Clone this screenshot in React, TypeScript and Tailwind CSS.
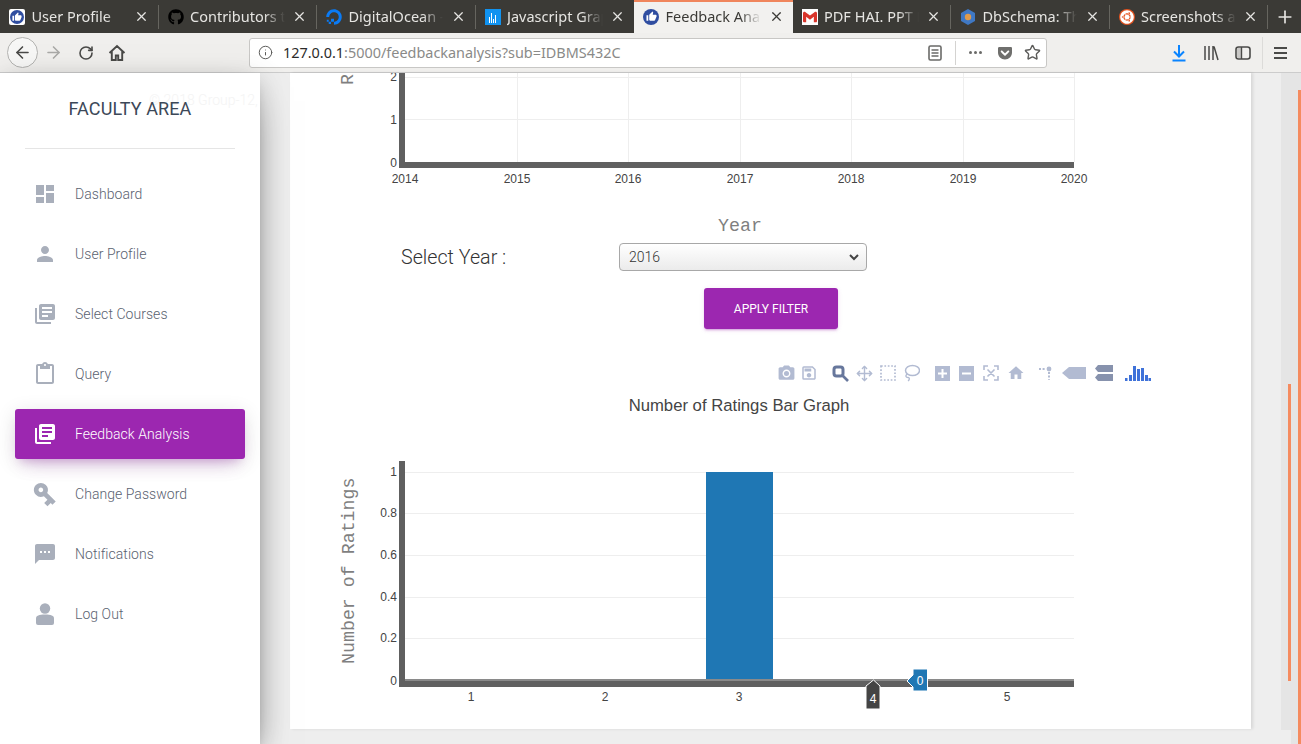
import { ArrowLeft, ArrowRight, RotateCw, Info, Star, Move, X, Plus } from "lucide-react";
import { FaGithub, FaDigitalOcean, FaGetPocket, FaUbuntu } from "react-icons/fa";
import { SiGmail } from "react-icons/si";
import {
  MdDashboard,
  MdPerson,
  MdLibraryBooks,
  MdContentPaste,
  MdVpnKey,
  MdSms,
  MdPhotoCamera,
  MdOutlineSave,
  MdHome,
  MdThumbUp,
} from "react-icons/md";
import type { ReactNode } from "react";

const TABS: { title: string; icon: ReactNode; active?: boolean; noDivider?: boolean }[] = [
  {
    title: "User Profile",
    icon: (
      <span className="flex h-4 w-4 items-center justify-center rounded-[2px] bg-white">
        <span className="flex h-[14px] w-[14px] items-center justify-center rounded-full bg-[#2f4da0]">
          <MdThumbUp size={10} className="text-white" />
        </span>
      </span>
    ),
  },
  { title: "Contributors to", icon: <FaGithub size={16} className="text-black" /> },
  { title: "DigitalOcean - Cl", icon: <FaDigitalOcean size={16} className="text-[#0a7bf5]" /> },
  {
    title: "Javascript Graph",
    noDivider: true,
    icon: (
      <span className="flex h-4 w-4 items-end justify-center gap-px bg-[#1193f0] pb-0.5">
        <i className="h-1.5 w-px bg-white" />
        <i className="h-2.5 w-px bg-white" />
        <i className="h-1 w-px bg-white" />
        <i className="h-2 w-px bg-white" />
      </span>
    ),
  },
  {
    title: "Feedback Analysis",
    active: true,
    icon: (
      <span className="flex h-4 w-4 items-center justify-center rounded-full bg-[#2f4da0]">
        <MdThumbUp size={11} className="text-white" />
      </span>
    ),
  },
  {
    title: "PDF HAI. PPT NU",
    icon: (
      <span className="flex h-4 w-4 items-center justify-center bg-white">
        <SiGmail size={14} className="text-[#d9352b]" />
      </span>
    ),
  },
  {
    title: "DbSchema: The",
    icon: (
      <svg width="16" height="16" viewBox="0 0 16 16">
        <path d="M8 0l7 4v8l-7 4-7-4V4z" fill="#3f78c4" />
        <circle cx="8" cy="8" r="3.2" fill="#e09a4a" />
      </svg>
    ),
  },
  {
    title: "Screenshots an",
    icon: (
      <span className="flex h-4 w-4 items-center justify-center rounded-full bg-[#e5531f]">
        <FaUbuntu size={14} className="text-white" />
      </span>
    ),
  },
];

const NAV = [
  { label: "Dashboard", icon: <MdDashboard size={24} /> },
  { label: "User Profile", icon: <MdPerson size={24} /> },
  { label: "Select Courses", icon: <MdLibraryBooks size={24} /> },
  { label: "Query", icon: <MdContentPaste size={24} /> },
  { label: "Feedback Analysis", icon: <MdLibraryBooks size={24} />, active: true },
  { label: "Change Password", icon: <MdVpnKey size={28} className="rotate-45" /> },
  { label: "Notifications", icon: <MdSms size={24} /> },
  {
    label: "Log Out",
    icon: (
      <svg width="18" height="22" viewBox="0 0 18 22" fill="currentColor">
        <circle cx="9" cy="5.500" r="5.200" />
        <path d="M0 15.500C0 12.500 3 11.500 9 11.500s9 1 9 4V20a2 2 0 0 1-2 2H2a2 2 0 0 1-2-2z" />
      </svg>
    ),
  },
];

function Tab({
  title,
  icon,
  active,
  noDivider,
}: {
  title: string;
  icon: ReactNode;
  active?: boolean;
  noDivider?: boolean;
}) {
  return (
    <div
      className={`flex h-[33px] w-[158.5px] items-center pl-[9px] pr-[9px] ${
        active ? "border-t-2 border-[#f0855c] bg-[#f2f1ef] pb-[2px] text-[#3b3a36]" : "text-[#e6e5e2]"
      }`}
    >
      <span className="flex h-4 w-4 shrink-0 items-center justify-center">{icon}</span>
      <span className="ml-[6.5px] w-[102px] overflow-hidden whitespace-nowrap text-[14.5px] [mask-image:linear-gradient(to_right,black_78%,transparent_100%)]">
        {title}
      </span>
      <X size={15} strokeWidth={2} className="ml-[7.5px] shrink-0" />
      {!active && !noDivider && (
        <span className="ml-auto h-[24px] w-px shrink-0 translate-x-[9px] bg-[#66655f]" />
      )}
    </div>
  );
}

function BrowserChrome() {
  return (
    <div className="font-['Noto_Sans',sans-serif]">
      <div className="flex h-[33px] bg-[#3b3a36]">
        {TABS.map((tab) => (
          <Tab key={tab.title} {...tab} />
        ))}
        <span className="ml-[5px] flex w-6 items-center justify-center text-[#e6e5e2]">
          <Plus size={20} strokeWidth={2} />
        </span>
      </div>
      <div className="flex h-[40px] items-center border-b border-[#cccccc] bg-[#f0efed] text-[#4a4a48]">
        <span className="ml-[7px] flex h-[31px] w-[31px] items-center justify-center rounded-full border border-[#b3b3b1] bg-[#f7f7f6]">
          <ArrowLeft size={19} strokeWidth={2} />
        </span>
        <ArrowRight size={19} strokeWidth={2} className="ml-[6px] text-[#a9a9a7]" />
        <RotateCw size={16} strokeWidth={2.4} className="ml-[15px]" />
        <svg width="18" height="18" viewBox="0 0 18 18" className="ml-[14px]">
          <path
            d="M1.500 9L9 2l7.500 7M3.800 7.500V16h4v-4.500h2.400V16h4V7.500"
            fill="none"
            stroke="currentColor"
            strokeWidth="1.900"
          />
        </svg>
        <div className="ml-[123px] flex h-[30px] w-[798px] items-center rounded-[3px] border border-[#c8c7c5] bg-white">
          <Info size={15} strokeWidth={1.6} className="ml-[8px] text-[#5c5c5a]" />
          <span className="ml-[10px] pt-px text-[14.43px] text-[#8a8a88]">
            <span className="text-[#2b2b2a]">127.0.0.1</span>:5000/feedbackanalysis?sub=IDBMS432C
          </span>
          <svg width="14" height="16" viewBox="0 0 14 16" className="ml-[307px] text-[#6a6a68]">
            <rect x="1" y="1" width="12" height="14" rx="1.500" fill="none" stroke="currentColor" strokeWidth="1.600" />
            <path d="M3.500 5h7M3.500 8h7M3.500 11h7" stroke="currentColor" strokeWidth="1.400" />
          </svg>
          <span className="ml-[13px] h-[24px] w-px bg-[#d4d3d1]" />
          <span className="ml-[13px] flex gap-[2px]">
            <i className="h-[3px] w-[3px] rounded-full bg-[#6a6a68]" />
            <i className="h-[3px] w-[3px] rounded-full bg-[#6a6a68]" />
            <i className="h-[3px] w-[3px] rounded-full bg-[#6a6a68]" />
          </span>
          <FaGetPocket size={16} className="ml-[15px] text-[#6f6f6d]" />
          <Star size={17} strokeWidth={2} className="ml-[11px] text-[#5c5c5a]" />
        </div>
        <svg width="16" height="18" viewBox="0 0 16 18" className="ml-[124px] text-[#0a84ff]">
          <path d="M8 1v11M3 7.500L8 12.500 13 7.500M1.500 16.500h13" fill="none" stroke="currentColor" strokeWidth="2" />
        </svg>
        <svg width="16" height="16" viewBox="0 0 16 16" className="ml-[16px]">
          <path d="M2 1v14M6 1v14M10 1v14M11 1.500l4 13.500" fill="none" stroke="currentColor" strokeWidth="1.500" />
        </svg>
        <svg width="16" height="14" viewBox="0 0 16 14" className="ml-[16px]">
          <rect x="1" y="1" width="14" height="12" rx="2.500" fill="none" stroke="currentColor" strokeWidth="1.600" />
          <rect x="2" y="2" width="4" height="10" fill="#c9c8c6" />
          <path d="M6.500 1v12" stroke="currentColor" strokeWidth="1.400" />
        </svg>
        <span className="ml-[11px] h-[32px] w-px bg-[#dcdbd9]" />
        <span className="ml-[11px] flex w-[13px] flex-col gap-[3px]">
          <i className="h-[2px] bg-[#4a4a48]" />
          <i className="h-[2px] bg-[#4a4a48]" />
          <i className="h-[2px] bg-[#4a4a48]" />
        </span>
      </div>
    </div>
  );
}

function Sidebar() {
  return (
    <aside className="relative z-10 w-[260px] shrink-0 bg-white font-['Roboto',sans-serif] shadow-[0_16px_38px_-12px_rgba(0,0,0,0.56),0_4px_25px_0_rgba(0,0,0,0.12),0_8px_10px_-5px_rgba(0,0,0,0.2)]">
      <span className="absolute left-[149px] top-[17px] w-[111px] overflow-hidden whitespace-nowrap text-[14px] font-light text-[#f4f4f4]">
        © 2018 Group-12,
      </span>
      <div className="mx-[25px] flex h-[76px] items-start justify-center border-b border-[#e5e5e5] pt-[24px]">
        <span className="relative text-[18px] leading-[24px] tracking-[0.1px] text-[#3c4858]">FACULTY AREA</span>
      </div>
      <nav className="mx-[15px] mt-[20px] flex flex-col gap-[10px]">
        {NAV.map((item) => (
          <div
            key={item.label}
            className={`flex h-[50px] items-center rounded-[3px] ${
              item.active
                ? "bg-[#9c27b0] text-white shadow-[0_12px_20px_-10px_rgba(156,39,176,0.28),0_4px_20px_0_rgba(0,0,0,0.12),0_7px_8px_-5px_rgba(156,39,176,0.2)]"
                : "text-[#5a6270]"
            }`}
          >
            <span
              className={`flex w-[60px] items-center justify-center ${
                item.active ? "text-white" : "text-[#a9afbb]"
              }`}
            >
              {item.icon}
            </span>
            <span className="text-[14px] font-light tracking-[0.05px]">{item.label}</span>
          </div>
        ))}
      </nav>
    </aside>
  );
}

function TopChart() {
  const xs = [405, 517, 628, 740, 851, 963, 1074];
  const years = [2014, 2015, 2016, 2017, 2018, 2019, 2020];
  return (
    <svg width="961" height="164" viewBox="290 73 961 164" className="block">
      <g shapeRendering="crispEdges">
        {[77, 119].map((y) => (
          <line key={y} x1="405" x2="1074" y1={y} y2={y} stroke="#eeeeee" />
        ))}
        {xs.slice(1).map((x) => (
          <line key={x} x1={x} x2={x} y1="73" y2="162" stroke="#eeeeee" />
        ))}
        <rect x="399" y="73" width="6" height="95" fill="#606060" />
        <rect x="399" y="162" width="675" height="6" fill="#606060" />
      </g>
      <g fontFamily="Liberation Sans, sans-serif" fontSize="12" fill="#444444">
        <text x="397" y="81" textAnchor="end">2</text>
        <text x="397" y="124" textAnchor="end">1</text>
        <text x="397" y="167" textAnchor="end">0</text>
        {years.map((year, i) => (
          <text key={year} x={xs[i]} y="183" textAnchor="middle">
            {year}
          </text>
        ))}
      </g>
      <text
        x="0"
        y="0"
        transform="translate(353 85) rotate(-90)"
        fontFamily="Liberation Mono, monospace"
        fontSize="18.3"
        fill="#7f7f7f"
      >
        R
      </text>
      <text x="740" y="231" textAnchor="middle" fontFamily="Liberation Mono, monospace" fontSize="18.3" fill="#7f7f7f">
        Year
      </text>
    </svg>
  );
}

function ModeBar() {
  const soft = "text-[#b2bbd2]";
  return (
    <div className="ml-[487px] flex h-4 items-center">
      <MdPhotoCamera size={19} className={soft} />
      <MdOutlineSave size={18} className={`ml-[4px] ${soft}`} />
      <svg width="17" height="17" viewBox="0 0 17 17" className="ml-[14px] text-[#67779c]">
        <rect x="2" y="2" width="9" height="9" rx="2.500" fill="none" stroke="currentColor" strokeWidth="3" />
        <path d="M11 11l5 5" stroke="currentColor" strokeWidth="2.600" />
      </svg>
      <Move size={17} strokeWidth={2} className={`ml-[7px] ${soft}`} />
      <svg width="16" height="16" viewBox="0 0 16 16" className={`ml-[7px] ${soft}`}>
        <rect x="1" y="1" width="14" height="14" fill="none" stroke="currentColor" strokeWidth="1.700" strokeDasharray="1.700 1.700" />
      </svg>
      <svg width="17" height="18" viewBox="0 0 17 18" className={`ml-[7px] ${soft}`}>
        <ellipse cx="9.500" cy="6.500" rx="7" ry="5" fill="none" stroke="currentColor" strokeWidth="1.500" />
        <path d="M4 10c-2 2-1 3.500 1 3.500s1.500 2.500 0 3.500" fill="none" stroke="currentColor" strokeWidth="1.400" />
      </svg>
      <svg width="15" height="15" viewBox="0 0 15 15" className={`ml-[15px] ${soft}`}>
        <path fillRule="evenodd" d="M0 0h15v15H0zM6.500 3v3.500H3v2h3.500V12h2V8.500H12v-2H8.500V3z" fill="currentColor" />
      </svg>
      <svg width="15" height="15" viewBox="0 0 15 15" className={`ml-[9px] ${soft}`}>
        <path fillRule="evenodd" d="M0 0h15v15H0zM3 6.500v2h9v-2z" fill="currentColor" />
      </svg>
      <svg width="16" height="16" viewBox="0 0 16 16" className={`ml-[9px] ${soft}`}>
        <path d="M1 5V1h4M11 1h4v4M15 11v4h-4M5 15H1v-4M4.500 4.500l7 7M11.500 4.500l-7 7" fill="none" stroke="currentColor" strokeWidth="1.600" />
      </svg>
      <MdHome size={18} className={`ml-[8px] ${soft}`} />
      <svg width="14" height="14" viewBox="0 0 14 14" className={`ml-[13px] ${soft}`}>
        <circle cx="11" cy="3" r="2.400" fill="currentColor" />
        <path d="M1 3h6M11 6v8" stroke="currentColor" strokeWidth="2" strokeDasharray="2 1.600" />
      </svg>
      <svg width="24" height="14" viewBox="0 0 24 14" className={`ml-[10px] ${soft}`}>
        <path d="M0 7l7-6h17v12H7z" fill="currentColor" />
      </svg>
      <svg width="18" height="16" viewBox="0 0 18 16" className="ml-[9px] text-[#8792ad]">
        <path d="M3 0h15v7H3L0 3.500zM3 9h15v7H3L0 12.500z" fill="currentColor" />
      </svg>
      <svg width="26" height="16" viewBox="0 0 26 16" className="ml-[12px] text-[#3f72d9]">
        <path
          d="M0 13h2.500v3H0zM4 10h3v6H4zM8 1h3v15H8zM12 4h3v12h-3zM16 3h3v13h-3zM20 10h3v6h-3zM23.500 13H26v3h-2.500z"
          fill="currentColor"
        />
      </svg>
    </div>
  );
}

function BarChart() {
  const grid = [472, 513, 555, 597, 638];
  const yLabels = ["1", "0.8", "0.6", "0.4", "0.2"];
  return (
    <svg width="961" height="339" viewBox="290 390 961 339" className="block">
      <text x="739" y="411" textAnchor="middle" fontFamily="Liberation Sans, sans-serif" fontSize="16.7" fill="#444444">
        Number of Ratings Bar Graph
      </text>
      <g shapeRendering="crispEdges">
        {grid.map((y) => (
          <line key={y} x1="405" x2="1074" y1={y} y2={y} stroke="#eeeeee" />
        ))}
        <rect x="706" y="472" width="67" height="208" fill="#1f77b4" />
        <rect x="399" y="461" width="6" height="226" fill="#606060" />
        <rect x="399" y="679" width="675" height="8" fill="#606060" />
        <rect x="405" y="679" width="669" height="2" fill="#8a8a8a" />
      </g>
      <g fontFamily="Liberation Sans, sans-serif" fontSize="12" fill="#444444">
        {grid.map((y, i) => (
          <text key={y} x="397" y={y + 4} textAnchor="end">
            {yLabels[i]}
          </text>
        ))}
        <text x="397" y="685" textAnchor="end">0</text>
        {["1", "2", "3", "5"].map((label) => (
          <text key={label} x={471 + (Number(label) - 1) * 134} y="701" textAnchor="middle">
            {label}
          </text>
        ))}
      </g>
      <text
        transform="translate(354 664) rotate(-90)"
        fontFamily="Liberation Mono, monospace"
        fontSize="18.3"
        fill="#7f7f7f"
      >
        Number of Ratings
      </text>
      <path d="M866 709v-23l7.500-6 6.500 6v23z" fill="#444444" stroke="#ffffff" strokeWidth="1" />
      <text x="873" y="703" textAnchor="middle" fontFamily="Liberation Sans, sans-serif" fontSize="12" fill="#ffffff">
        4
      </text>
      <path d="M907 681l6-6v-6h14.500v22H913v-4z" fill="#1f77b4" stroke="#ffffff" strokeWidth="1" />
      <text x="920" y="685" textAnchor="middle" fontFamily="Liberation Sans, sans-serif" fontSize="12" fill="#ffffff">
        0
      </text>
    </svg>
  );
}

function Card() {
  return (
    <section className="w-[961px] bg-white shadow-[2px_0_3px_rgba(0,0,0,0.1)]">
      <TopChart />
      <div className="ml-[111px] mt-[6px] flex h-[28px] items-center font-['Roboto',sans-serif]">
        <span className="w-[218px] pt-[2px] text-[19.7px] font-light text-[#333333]">Select Year :</span>
        <div className="relative h-[28px] w-[248px]">
          <select
            defaultValue="2016"
            className="h-full w-full appearance-none rounded-[4px] border border-[#a8a8a8] bg-gradient-to-b from-white to-[#ebebeb] pl-[9px] text-[14px] font-light text-[#333333]"
          >
            <option>2015</option>
            <option>2016</option>
            <option>2017</option>
          </select>
          <svg width="10" height="7" viewBox="0 0 10 7" className="pointer-events-none absolute right-[8px] top-[11px] text-[#444444]">
            <path d="M1 1l4 4 4-4" fill="none" stroke="currentColor" strokeWidth="2" />
          </svg>
        </div>
      </div>
      <button className="ml-[414px] mt-[17px] flex h-[41px] w-[134px] items-center justify-center rounded-[3px] bg-[#9c27b0] font-['Roboto',sans-serif] text-[12px] text-white shadow-[0_2px_2px_0_rgba(156,39,176,0.14),0_3px_1px_-2px_rgba(156,39,176,0.2),0_1px_5px_0_rgba(156,39,176,0.12)]">
        APPLY FILTER
      </button>
      <div className="mt-[36px]">
        <ModeBar />
      </div>
      <div className="mt-[9px]">
        <BarChart />
      </div>
    </section>
  );
}

export default function App() {
  return (
    <div className="flex h-[744px] w-[1301px] flex-col overflow-hidden bg-[#eeeeee]">
      <BrowserChrome />
      <main className="relative flex min-h-0 flex-1">
        <Sidebar />
        <div className="ml-[30px] min-w-0">
          <Card />
        </div>
        {/* page scrollbars */}
        <div className="absolute right-[10px] top-0 h-[657px] w-[10px] bg-[#e5e5e5]">
          <div className="absolute bottom-[49px] right-0 h-[297px] w-[3px] bg-[#f58b5f]" />
        </div>
        <div className="absolute bottom-0 right-0 top-0 w-[10px] bg-[#e5e5e5]">
          <div className="absolute bottom-0 right-0 top-[17px] w-[3px] bg-[#f58b5f]" />
        </div>
      </main>
    </div>
  );
}
